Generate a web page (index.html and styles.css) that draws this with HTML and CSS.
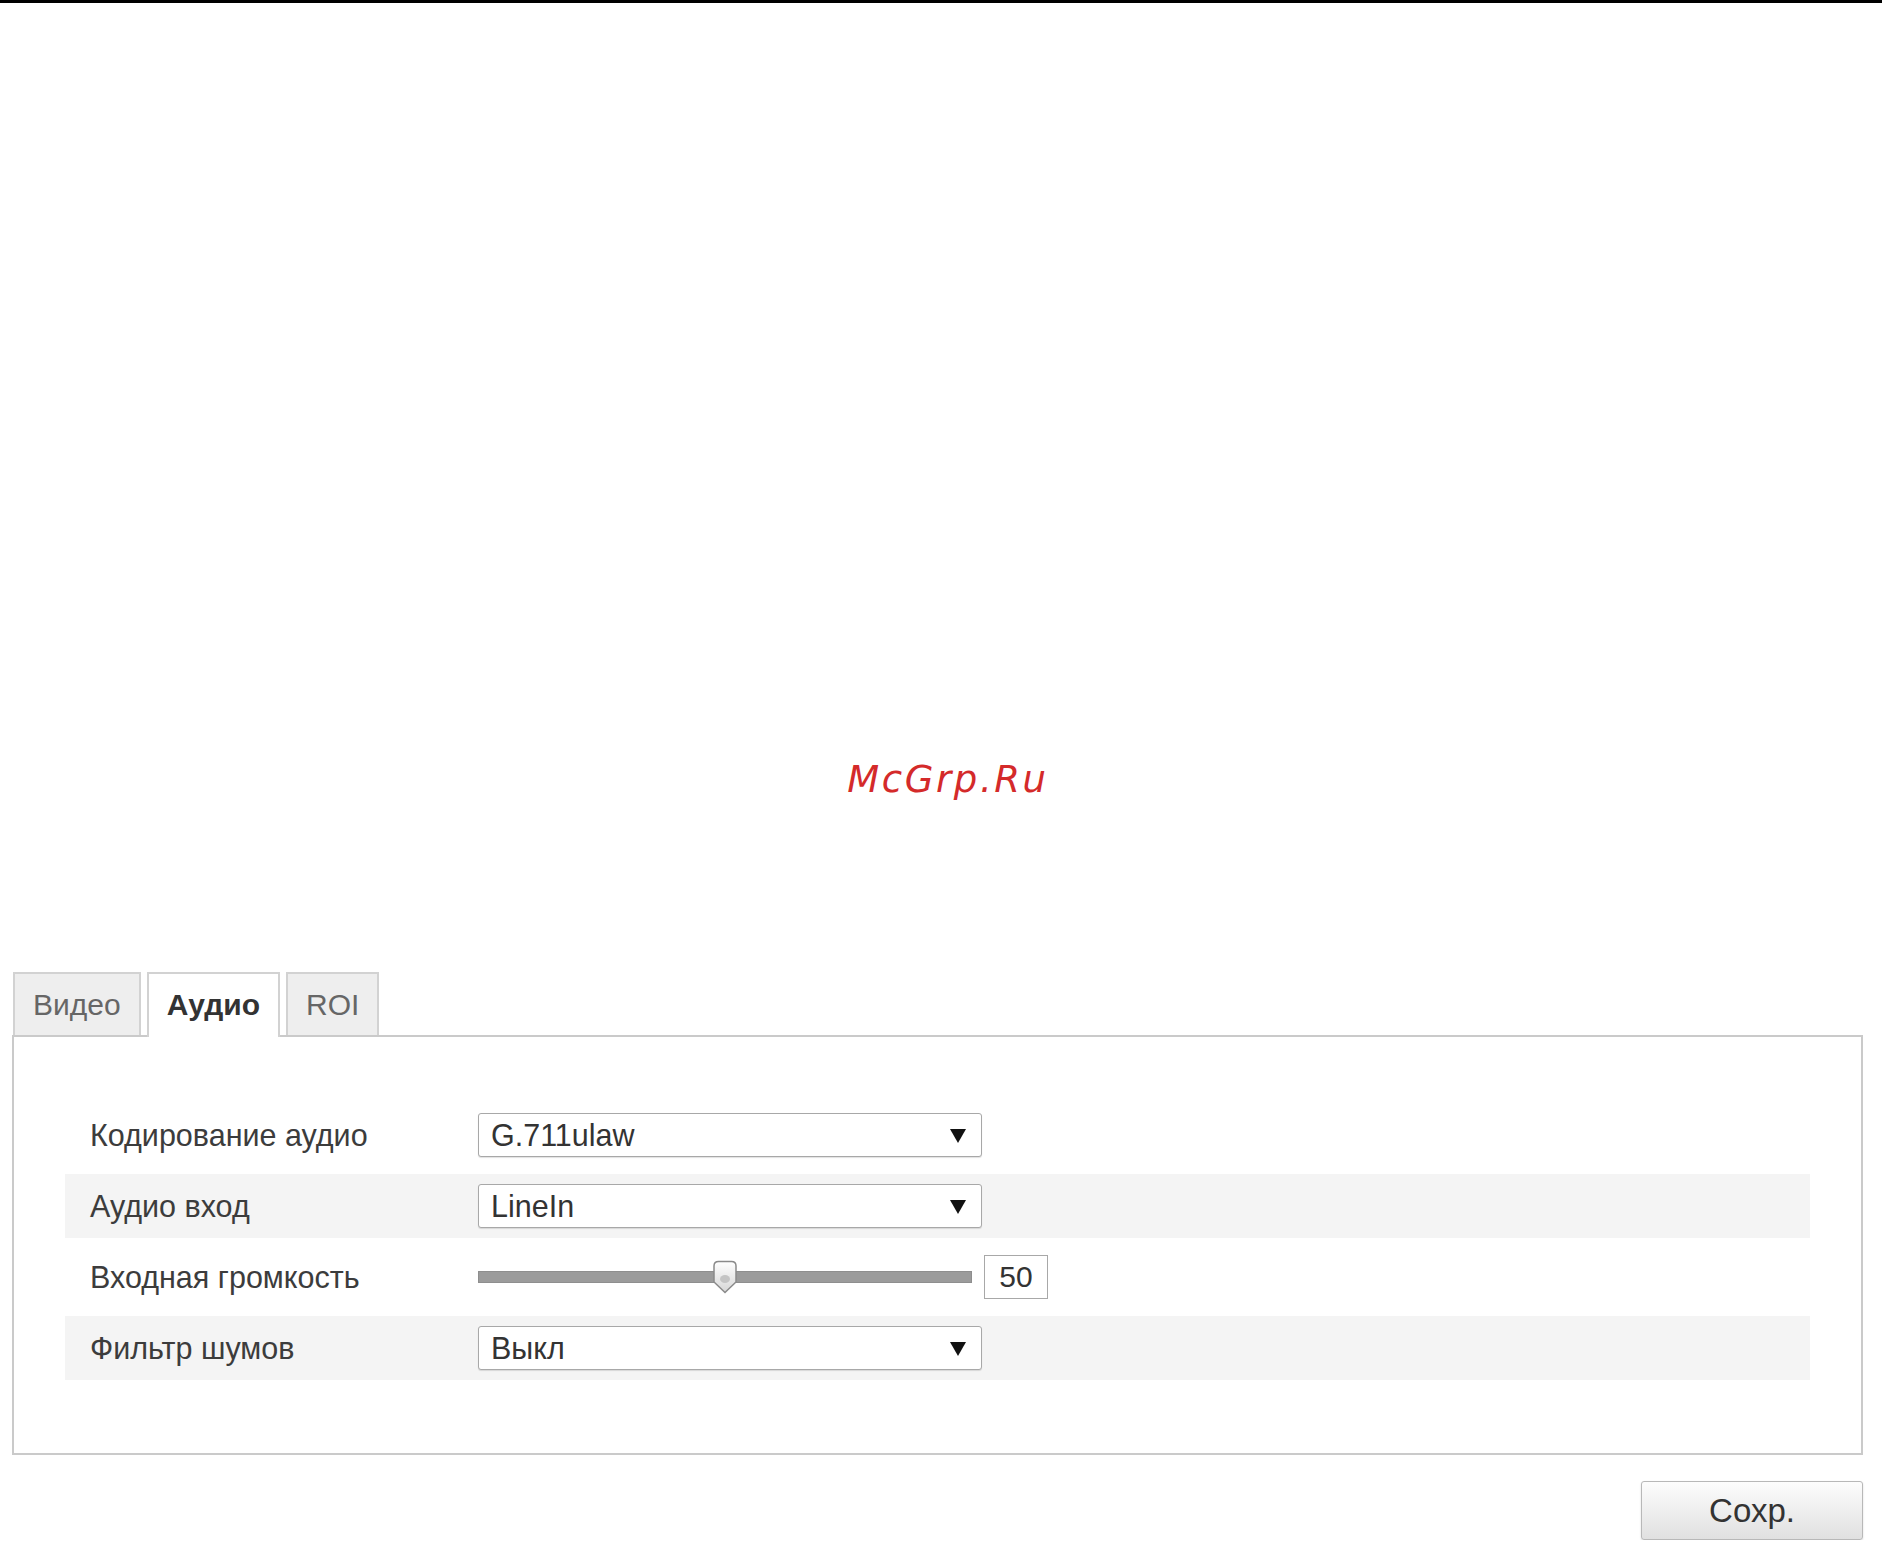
FILE: index.html
```html
<!DOCTYPE html>
<html lang="ru">
<head>
    <meta charset="UTF-8">
    <title>Аудио</title>
    <link rel="stylesheet" href="styles.css">
</head>
<body>
    <div class="topbar"></div>

    <div class="watermark">McGrp.Ru</div>

    <div class="settings">
        <div class="tabs">
            <div class="tab">Видео</div>
            <div class="tab tab-active">Аудио</div>
            <div class="tab">ROI</div>
        </div>

        <div class="panel">
            <div class="row">
                <div class="label">Кодирование аудио</div>
                <div class="select">
                    <span>G.711ulaw</span>
                    <svg class="arrow" width="16" height="15" viewBox="0 0 16 15"><path d="M0 1 H16 L8 15 Z" fill="#111"/></svg>
                </div>
            </div>
            <div class="row row-alt">
                <div class="label">Аудио вход</div>
                <div class="select">
                    <span>LineIn</span>
                    <svg class="arrow" width="16" height="15" viewBox="0 0 16 15"><path d="M0 1 H16 L8 15 Z" fill="#111"/></svg>
                </div>
            </div>
            <div class="row">
                <div class="label">Входная громкость</div>
                <div class="slider">
                    <div class="track">
                        <svg class="thumb" style="left: 50%;" width="26" height="34" viewBox="0 0 26 34">
                            <defs>
                                <linearGradient id="tg" x1="0" y1="0" x2="0" y2="1">
                                    <stop offset="0" stop-color="#ffffff"/>
                                    <stop offset="1" stop-color="#d6d6d6"/>
                                </linearGradient>
                            </defs>
                            <path d="M2 6 Q2 1.5 6.5 1.5 H19.5 Q24 1.5 24 6 V22 L13 32.5 L2 22 Z" fill="url(#tg)" stroke="#8a8a8a" stroke-width="1.5"/>
                            <ellipse cx="13" cy="19" rx="5" ry="4" fill="#c4c4c4"/>
                        </svg>
                    </div>
                    <div class="value">50</div>
                </div>
            </div>
            <div class="row row-alt">
                <div class="label">Фильтр шумов</div>
                <div class="select">
                    <span>Выкл</span>
                    <svg class="arrow" width="16" height="15" viewBox="0 0 16 15"><path d="M0 1 H16 L8 15 Z" fill="#111"/></svg>
                </div>
            </div>
        </div>

        <div class="actions">
            <button class="btn-save">Сохр.</button>
        </div>
    </div>
</body>
</html>
```

FILE: styles.css
```css
body {
    margin: 0;
    font-family: "Liberation Sans", Arial, sans-serif;
    color: #333;
    background: #fff;
}
.topbar {
    height: 3px;
    background: #000;
}
.watermark {
    margin-top: 755px;
    padding-left: 14px;
    text-align: center;
    font-family: "DejaVu Sans", sans-serif;
    font-style: italic;
    font-size: 37px;
    letter-spacing: 2.6px;
    color: #d42a2a;
}
.settings {
    margin: 171px 19px 0 12px;
}
.tabs {
    display: flex;
    gap: 6px;
    padding-left: 1px;
}
.tab {
    height: 61px;
    line-height: 61px;
    padding: 0 18px;
    font-size: 30px;
    color: #666;
    background: #eeeeee;
    border: 2px solid #d2d2d2;
    border-bottom: none;
}
.tab-active {
    background: #fff;
    color: #333;
    font-weight: bold;
    height: 63px;
    margin-bottom: -2px;
    position: relative;
}
.panel {
    border: 2px solid #cacaca;
    padding: 66px 51px 73px 51px;
    display: flex;
    flex-direction: column;
    gap: 7px;
}
.row {
    display: flex;
    align-items: center;
    height: 64px;
    padding-left: 25px;
}
.row-alt {
    background: #f4f4f4;
}
.label {
    width: 388px;
    font-size: 30.5px;
    color: #3c3c3c;
}
.select {
    box-sizing: border-box;
    width: 504px;
    height: 44px;
    display: flex;
    align-items: center;
    justify-content: space-between;
    padding: 0 15px 0 12px;
    border: 1px solid #a8a8a8;
    border-radius: 3px;
    background: #fff;
    box-shadow: 0 1px 1px rgba(0, 0, 0, 0.12);
    font-size: 30.5px;
    color: #333;
}
.slider {
    display: flex;
    align-items: center;
}
.track {
    position: relative;
    box-sizing: border-box;
    width: 494px;
    height: 12px;
    background: #9b9b9b;
    border: 1px solid #8e8e8e;
}
.thumb {
    position: absolute;
    top: -12px;
    margin-left: -13px;
}
.value {
    box-sizing: border-box;
    margin-left: 12px;
    width: 64px;
    height: 44px;
    line-height: 42px;
    text-align: center;
    border: 1px solid #a8a8a8;
    font-size: 30px;
    color: #333;
}
.actions {
    display: flex;
    justify-content: flex-end;
    margin-top: 26px;
}
.btn-save {
    width: 222px;
    height: 59px;
    font-family: "Liberation Sans", Arial, sans-serif;
    font-size: 33px;
    color: #333;
    border: 1px solid #b8b8b8;
    border-radius: 3px;
    background: linear-gradient(#fdfdfd, #e0e0e0);
    box-shadow: 0 1px 2px rgba(0, 0, 0, 0.15);
}
```
